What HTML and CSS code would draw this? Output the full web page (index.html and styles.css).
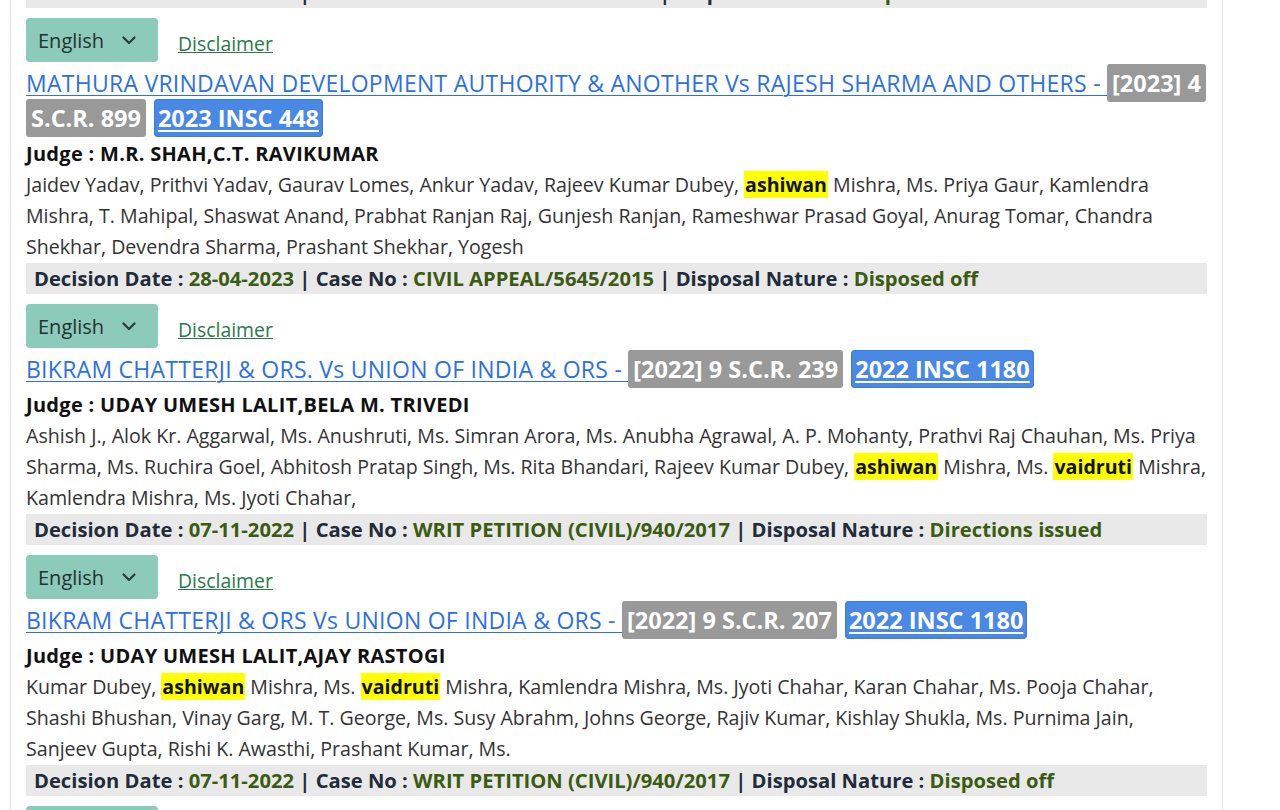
FILE: index.html
```html
<!DOCTYPE html>
<html lang="en">
<head>
<meta charset="utf-8">
<title>Judgments</title>
<link rel="stylesheet" href="styles.css">
</head>
<body>
<div class="page">
  <div class="card">
    <div class="decision prev"><span class="lbl">Decision Date :</span> <span class="val">12-05-2023</span> <span class="lbl">| Case No :</span> <span class="val">CIVIL APPEAL/3191/2023</span> <span class="lbl">| Disposal Nature :</span> <span class="val">Disposed off</span></div>

    <div class="item">
      <div class="tools">
        <div class="lang">English <svg class="chev" width="14" height="9" viewBox="0 0 14 9"><polyline points="1.5,1.5 7,7 12.5,1.5" fill="none" stroke="#2b3a3a" stroke-width="2.2" stroke-linecap="round" stroke-linejoin="round"/></svg></div>
        <a class="disc" href="#">Disclaimer</a>
      </div>
      <div class="title"><a class="case" href="#">MATHURA VRINDAVAN DEVELOPMENT AUTHORITY &amp; ANOTHER Vs RAJESH SHARMA AND OTHERS - </a> <span class="scr">[2023] 4 S.C.R. 899</span> <a class="insc" href="#">2023 INSC 448</a></div>
      <div class="judge">Judge : M.R. SHAH,C.T. RAVIKUMAR</div>
      <div class="adv">Jaidev Yadav, Prithvi Yadav, Gaurav Lomes, Ankur Yadav, Rajeev Kumar Dubey, <mark>ashiwan</mark> Mishra, Ms. Priya Gaur, Kamlendra Mishra, T. Mahipal, Shaswat Anand, Prabhat Ranjan Raj, Gunjesh Ranjan, Rameshwar Prasad Goyal, Anurag Tomar, Chandra Shekhar, Devendra Sharma, Prashant Shekhar, Yogesh</div>
      <div class="decision"><span class="lbl">Decision Date :</span> <span class="val">28-04-2023</span> <span class="lbl">| Case No :</span> <span class="val">CIVIL APPEAL/5645/2015</span> <span class="lbl">| Disposal Nature :</span> <span class="val">Disposed off</span></div>
    </div>

    <div class="item">
      <div class="tools">
        <div class="lang">English <svg class="chev" width="14" height="9" viewBox="0 0 14 9"><polyline points="1.5,1.5 7,7 12.5,1.5" fill="none" stroke="#2b3a3a" stroke-width="2.2" stroke-linecap="round" stroke-linejoin="round"/></svg></div>
        <a class="disc" href="#">Disclaimer</a>
      </div>
      <div class="title"><a class="case" href="#">BIKRAM CHATTERJI &amp; ORS. Vs UNION OF INDIA &amp; ORS - </a> <span class="scr">[2022] 9 S.C.R. 239</span> <a class="insc" href="#">2022 INSC 1180</a></div>
      <div class="judge">Judge : UDAY UMESH LALIT,BELA M. TRIVEDI</div>
      <div class="adv">Ashish J., Alok Kr. Aggarwal, Ms. Anushruti, Ms. Simran Arora, Ms. Anubha Agrawal, A. P. Mohanty, Prathvi Raj Chauhan, Ms. Priya Sharma, Ms. Ruchira Goel, Abhitosh Pratap Singh, Ms. Rita Bhandari, Rajeev Kumar Dubey, <mark>ashiwan</mark> Mishra, Ms. <mark>vaidruti</mark> Mishra, Kamlendra Mishra, Ms. Jyoti Chahar,</div>
      <div class="decision"><span class="lbl">Decision Date :</span> <span class="val">07-11-2022</span> <span class="lbl">| Case No :</span> <span class="val">WRIT PETITION (CIVIL)/940/2017</span> <span class="lbl">| Disposal Nature :</span> <span class="val">Directions issued</span></div>
    </div>

    <div class="item">
      <div class="tools">
        <div class="lang">English <svg class="chev" width="14" height="9" viewBox="0 0 14 9"><polyline points="1.5,1.5 7,7 12.5,1.5" fill="none" stroke="#2b3a3a" stroke-width="2.2" stroke-linecap="round" stroke-linejoin="round"/></svg></div>
        <a class="disc" href="#">Disclaimer</a>
      </div>
      <div class="title"><a class="case" href="#">BIKRAM CHATTERJI &amp; ORS Vs UNION OF INDIA &amp; ORS - </a> <span class="scr">[2022] 9 S.C.R. 207</span> <a class="insc" href="#">2022 INSC 1180</a></div>
      <div class="judge">Judge : UDAY UMESH LALIT,AJAY RASTOGI</div>
      <div class="adv">Kumar Dubey, <mark>ashiwan</mark> Mishra, Ms. <mark>vaidruti</mark> Mishra, Kamlendra Mishra, Ms. Jyoti Chahar, Karan Chahar, Ms. Pooja Chahar, Shashi Bhushan, Vinay Garg, M. T. George, Ms. Susy Abrahm, Johns George, Rajiv Kumar, Kishlay Shukla, Ms. Purnima Jain, Sanjeev Gupta, Rishi K. Awasthi, Prashant Kumar, Ms.</div>
      <div class="decision"><span class="lbl">Decision Date :</span> <span class="val">07-11-2022</span> <span class="lbl">| Case No :</span> <span class="val">WRIT PETITION (CIVIL)/940/2017</span> <span class="lbl">| Disposal Nature :</span> <span class="val">Disposed off</span></div>
    </div>

    <div class="item">
      <div class="tools">
        <div class="lang">English <svg class="chev" width="14" height="9" viewBox="0 0 14 9"><polyline points="1.5,1.5 7,7 12.5,1.5" fill="none" stroke="#2b3a3a" stroke-width="2.2" stroke-linecap="round" stroke-linejoin="round"/></svg></div>
        <a class="disc" href="#">Disclaimer</a>
      </div>
    </div>
  </div>
</div>
</body>
</html>
```

FILE: styles.css
```css
html, body {
  margin: 0;
  padding: 0;
  background: #ffffff;
  overflow: hidden;
}
body {
  font-family: "Open Sans", "Noto Sans", "Liberation Sans", sans-serif;
  color: #333333;
}
.page {
  padding-left: 10px;
  height: 810px;
  overflow: hidden;
}
.card {
  width: 1181px;
  margin-top: -24px;
  padding: 0 15px;
  border-left: 1px solid #e4e4e4;
  border-right: 1px solid #e4e4e4;
}
.item {
  padding-top: 10px;
}
.tools {
  display: flex;
  align-items: center;
  gap: 20px;
}
.lang {
  width: 132px;
  height: 44px;
  box-sizing: border-box;
  padding: 0 22px 0 12px;
  background: #8ccab9;
  border-radius: 4px;
  display: flex;
  align-items: center;
  justify-content: space-between;
  font-size: 20px;
  color: #243232;
}
.chev {
  display: block;
}
.disc {
  font-size: 19.4px;
  color: #2a7a48;
  text-decoration: underline;
  margin-top: 6px;
}
.title {
  font-size: 23px;
  line-height: 35px;
  margin-top: 4px;
}
.case {
  color: #2d70e4;
  letter-spacing: 0.26px;
  text-decoration: underline;
  text-decoration-thickness: 1px;
  text-underline-offset: 3px;
}
.scr {
  font-size: 23.5px;
  background: #999999;
  color: #ffffff;
  font-weight: 700;
  padding: 3px 5px;
  border-radius: 3px;
  -webkit-box-decoration-break: clone;
  box-decoration-break: clone;
}
.insc {
  font-size: 23.5px;
  background: #4a88e6;
  color: #ffffff;
  font-weight: 700;
  padding: 2px 3px;
  margin-left: 2px;
  border: 1px solid #3f7bd8;
  border-radius: 4px;
  text-decoration: underline;
  text-underline-offset: 3px;
}
.judge {
  font-size: 20px;
  letter-spacing: 0.3px;
  font-weight: 700;
  color: #111111;
  line-height: 31px;
  padding-top: 2px;
}
.adv {
  font-size: 19.6px;
  line-height: 31px;
  color: #333333;
}
mark {
  background: #ffff00;
  color: #111111;
  font-weight: 700;
  padding: 0 1px;
}
.decision {
  margin-top: 1px;
  background: #e9e9e9;
  font-size: 20.2px;
  font-weight: 700;
  line-height: 31px;
  padding: 0 8px;
}
.decision .lbl {
  color: #222b3a;
}
.decision .val {
  color: #3a5b12;
}
```
